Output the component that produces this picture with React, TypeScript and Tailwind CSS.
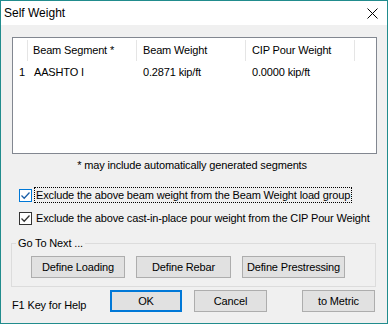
import React from "react"

const font = { fontFamily: '"Liberation Sans", Arial, sans-serif' }

function CheckBox({ focused }: { focused?: boolean }) {
  const color = focused ? "#0078d7" : "#333333"
  return (
    <svg width="13" height="13" viewBox="0 0 13 13" className="shrink-0">
      <rect x="0.5" y="0.5" width="12" height="12" fill="#ffffff" stroke={color} />
      <path d="M2.5 6.5 L5.2 9.2 L10.5 3.5" fill="none" stroke={focused ? "#1a5fa8" : "#333333"} strokeWidth="1.3" />
    </svg>
  )
}

function Button({ label, w, primary }: { label: string; w: string; primary?: boolean }) {
  return (
    <button
      className={`${w} h-[22px] bg-[#e1e1e1] text-[11px] tracking-[-0.15px] text-black leading-none whitespace-nowrap ${
        primary ? "border-2 border-[#0078d7]" : "border border-[#adadad]"
      }`}
    >
      {label}
    </button>
  )
}

export default function App() {
  return (
    <div
      style={font}
      className="relative w-[388px] h-[324px] border border-[#218c8d] bg-[#f0f0f0] flex flex-col text-[11px] tracking-[-0.15px] text-black overflow-hidden"
    >
      {/* title bar */}
      <div className="h-[24px] bg-white flex items-center justify-between pl-[3px] pr-[9px] shrink-0">
        <span className="text-[12px] leading-[14px] tracking-normal">Self Weight</span>
        <svg width="11" height="11" viewBox="0 0 11 11" className="mt-[1px]">
          <path d="M0.5 0.5 L10.5 10.5 M10.5 0.5 L0.5 10.5" stroke="#000" strokeWidth="1" />
        </svg>
      </div>

      <div className="flex flex-col px-[11px]">
        {/* list */}
        <div className="mt-[12px] w-[365px] h-[117px] border border-[#828790] bg-white flex flex-col">
          <div className="flex h-[25px] items-stretch">
            <div className="w-[15px] my-[2px] border-r border-[#e5e5e5]" />
            <div className="w-[109px] my-[2px] border-r border-[#e5e5e5] pl-[5px] flex items-center">Beam Segment *</div>
            <div className="w-[109px] my-[2px] border-r border-[#e5e5e5] pl-[6px] flex items-center">Beam Weight</div>
            <div className="w-[109px] my-[2px] border-r border-[#e5e5e5] pl-[6px] flex items-center">CIP Pour Weight</div>
          </div>
          <div className="flex h-[18px] items-center">
            <div className="w-[15px] text-right pr-[3px]">1</div>
            <div className="w-[109px] pl-[6px]">AASHTO I</div>
            <div className="w-[109px] pl-[6px]">0.2871 kip/ft</div>
            <div className="w-[109px] pl-[6px]">0.0000 kip/ft</div>
          </div>
        </div>

        <div className="mt-[4px] leading-[14px] text-center pr-[4px]">* may include automatically generated segments</div>

        {/* options */}
        <div className="mt-[15px] h-[16px] flex items-center pl-[7px]">
          <CheckBox focused />
          <span className="ml-[2px] h-[16px] px-[1px] border border-dotted border-black flex items-center whitespace-nowrap">
            Exclude the above beam weight from the Beam Weight load group
          </span>
        </div>
        <div className="mt-[7px] h-[16px] flex items-center pl-[7px]">
          <CheckBox />
          <span className="ml-[3px] px-[1px] whitespace-nowrap">
            Exclude the above cast-in-place pour weight from the CIP Pour Weight
          </span>
        </div>

        {/* go to next */}
        <fieldset className="mt-[10px] -ml-[1px] w-[365px] border border-[#dcdcdc] px-[4px] pb-[8px]">
          <legend className="px-[2px] leading-[14px]">Go To Next ...</legend>
          <div className="mt-[6px] ml-[15px] flex gap-[11px]">
            <Button label="Define Loading" w="w-[94px]" />
            <Button label="Define Rebar" w="w-[95px]" />
            <Button label="Define Prestressing" w="w-[103px]" />
          </div>
        </fieldset>

        {/* footer */}
        <div className="mt-[3px] flex items-end">
          <div className="w-[98px] leading-[14px]">F1 Key for Help</div>
          <Button label="OK" w="w-[72px]" primary />
          <div className="ml-[12px]">
            <Button label="Cancel" w="w-[73px]" />
          </div>
          <div className="ml-[35px]">
            <Button label="to Metric" w="w-[73px]" />
          </div>
        </div>
      </div>
    </div>
  )
}
